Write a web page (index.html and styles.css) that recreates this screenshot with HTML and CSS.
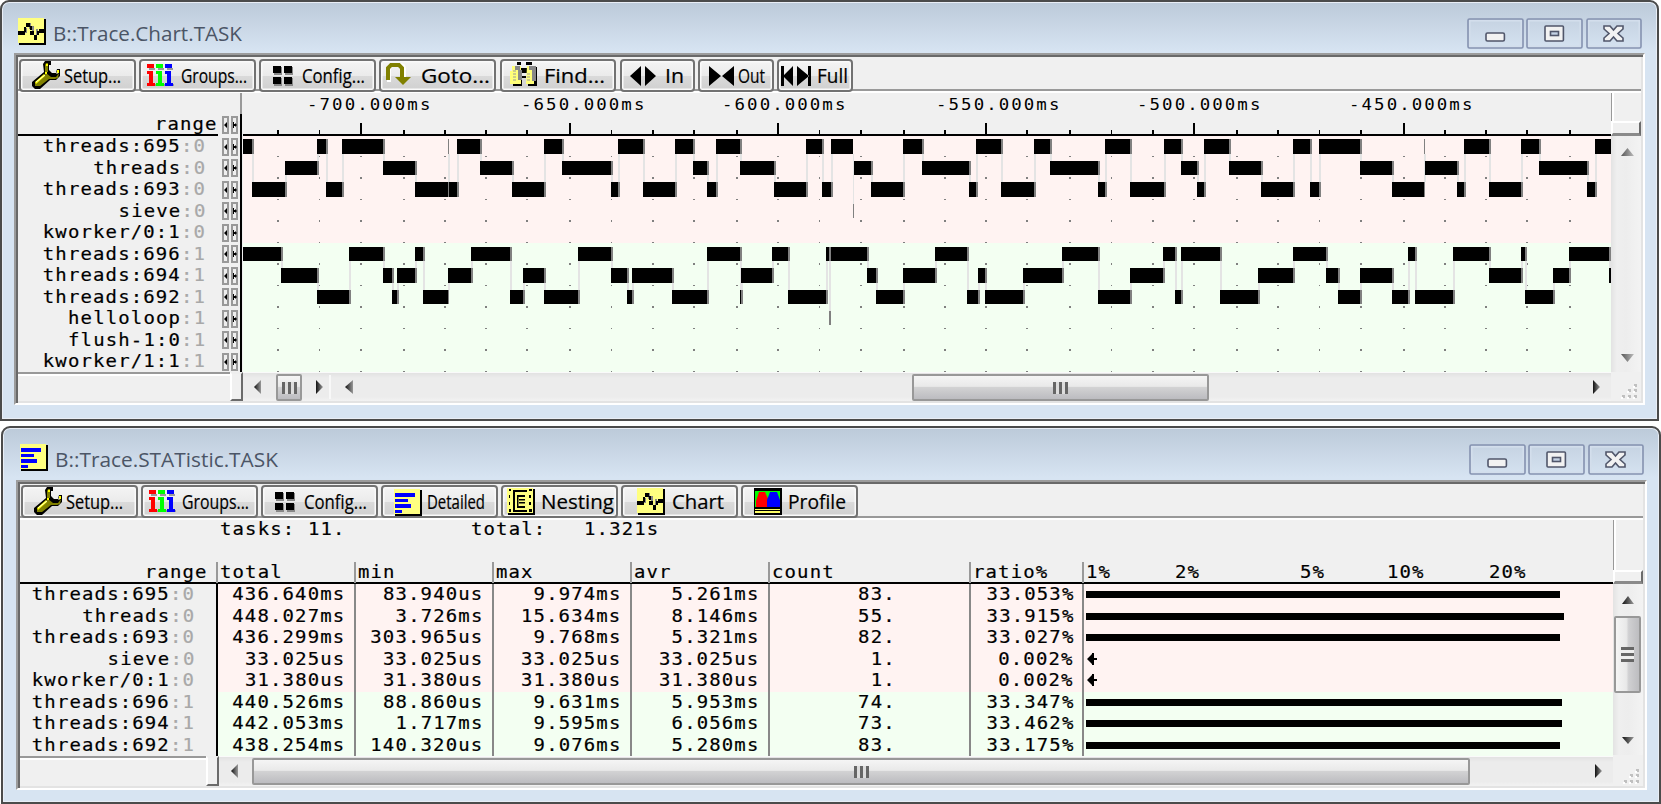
FILE: index.html
```html
<!DOCTYPE html>
<html lang="en">
<head>
<meta charset="utf-8">
<title>B::Trace</title>
<link rel="stylesheet" href="styles.css">
</head>
<body>
<svg width="0" height="0" class="defs">
  <defs>
    <symbol id="i-wrench" viewBox="0 0 29 28">
      <path d="M13 0h6v4h-2v5l3 3h4l1-4h3v7l-4 4h-6L8 28H3l-3-3v-4L12 11l-1-8z" fill="#000"/>
      <path d="M14 2h2v9h-3V4zM14 12l5 4h5l3-4-1 5-3 1h-6l-9 7H3v-3z" fill="#808000"/>
      <path d="M14 3h2v2h-2zM13 11h2v2h-2zM25 9h2v3h-2zM3 21l9-8 1 2-9 8z" fill="#ff0"/>
      <path d="M4 21l9-7M24 12h2" stroke="#ffc" stroke-width="1"/>
    </symbol>
    <symbol id="i-groups" viewBox="0 0 27 24">
      <path d="M2 4h6v2H2zM11 4h6v2h-6zM20 4h6v2h-6zM8 20h2v2H8zM17 20h2v2h-2zM25 20h2v2h-2z" fill="#999"/>
      <path d="M0 0h7v4H0zM0 7h6v12h2v3H0v-3h2v-9H0z" fill="#f00"/>
      <path d="M9 0h7v4H9zM9 7h6v12h2v3H9v-3h2v-9H9z" fill="#0f0"/>
      <path d="M18 0h7v4h-7zM18 7h6v12h2v3h-8v-3h2v-9h-2z" fill="#00f"/>
    </symbol>
    <symbol id="i-config" viewBox="0 0 20 20">
      <path d="M1 1h8v8H1zM12 1h8v8h-8zM1 12h8v8H1zM12 12h8v8h-8z" fill="#888"/>
      <path d="M0 0h8v7H0zM11 0h8v7h-8zM0 11h8v7H0zM11 11h8v7h-8z"/>
    </symbol>
    <symbol id="i-goto" viewBox="0 0 26 24">
      <path d="M2 18V5q0-4 4-4h7q4 0 4 4v11" fill="none" stroke="#fff" stroke-width="4" transform="translate(1 1)"/>
      <path d="M2 17V5l3-3h8l3 3v11" fill="none" stroke="#808000" stroke-width="4"/>
      <path d="M9 14h16l-8 8z" fill="#808000"/>
    </symbol>
    <symbol id="i-find" viewBox="0 0 27 24">
      <path d="M7 0h4v3H7zM16 0h6v3h-6zM10 6h7v5h-7zM9 17h3v7H3v-2h6zM12 14h4v2h-4zM23 5h4v19h-9v-2h5z"/>
      <path d="M2 4h9v18H0V9h2zM17 4h7v18h-8z" fill="#ffff78"/>
      <path d="M5 4h5v4H5zM8 8h4v10H8zM19 4h7v4h-7zM22 8h4v11h-4z" fill="#888"/>
      <path d="M3 9h3M3 12h3M3 15h3M3 18h3M17 12h3M17 15h3M17 18h3" stroke="#999"/>
    </symbol>
    <symbol id="i-in" viewBox="0 0 26 20"><path d="M0 10 11 0v20zM26 10 15 0v20z"/></symbol>
    <symbol id="i-out" viewBox="0 0 26 20"><path d="M12 10 0 0v20zM13 10 25 0v20z"/></symbol>
    <symbol id="i-full" viewBox="0 0 30 20"><path d="M0 0h3v20H0zM2 10 12 0v20zM27 0h3v20h-3zM28 10 16 0v20z"/></symbol>
    <symbol id="i-chart" viewBox="0 0 28 27">
      <path d="M1 1h27v26H1z"/><path d="M0 0h26v25H0z" fill="#ffff80"/>
      <path d="M11 5h2v6h-2zM7 10h2v5H7zM18 11h2v6h-2zM14 8h2v5h-2z" fill="#888"/>
      <path d="M0 13h7v4H0zM6 9h2v5H6zM8 5h4v4H8zM12 8h2v4h-2zM12 13h4v4h-4zM16 17h3v5h-3zM19 13h2v4h-2zM21 11h5v4h-5z"/>
    </symbol>
    <symbol id="i-stat" viewBox="0 0 28 27">
      <path d="M1 1h27v26H1z"/><path d="M0 0h26v25H0z" fill="#ffff80"/>
      <path d="M1 4h20v4H1zM1 10h13v3H1zM1 15h16v4H1zM1 21h7v3H1z" fill="#00f"/>
    </symbol>
    <symbol id="i-nest" viewBox="0 0 28 27">
      <path d="M1 1h27v26H1z"/><path d="M0 0h26v25H0z" fill="#ffff80"/>
      <path d="M6 2h14v2H6zM6 2h2v22H6zM6 22h14v2H6zM10 7h8v2h-8zM12 11h6v1.500h-6zM12 14h6v1.500h-6zM10 18h8v2h-8zM10 7h1.500v13H10zM2 1h2v2H2zM2 7h1v3H2zM2 14h1v3H2zM2 21h2v3H2zM22 1h3v2h-3zM22 7h2v3h-2zM22 14h2v3h-2zM22 21h3v3h-3z"/>
    </symbol>
    <symbol id="i-prof" viewBox="0 0 28 27">
      <path d="M0 0h28v27H0z"/><path d="M1 3h25v16H1z" fill="#0f0"/>
      <path d="M2 19v-6l3-9h6l4 9v6z" fill="#f00"/><path d="M13 19v-7l3-8h7l3 8v7z" fill="#00f"/>
      <path d="M1 21h25v1H1zM1 23h25v2H1z" fill="#ff6"/>
    </symbol>
    <symbol id="caps" viewBox="0 0 176 32">
      <g fill="none" stroke="#8592b0" stroke-width="1.6">
        <rect x="1" y="1" width="55" height="29" rx="1.5"/><rect x="60" y="1" width="55" height="29" rx="1.5"/><rect x="120" y="1" width="54" height="29" rx="1.5"/>
      </g>
      <g fill="none" stroke="#d3deec" stroke-width="1.6">
        <rect x="2.8" y="2.8" width="51.4" height="25.4"/><rect x="61.8" y="2.8" width="51.4" height="25.4"/><rect x="121.8" y="2.8" width="50.4" height="25.4"/>
      </g>
      <g stroke="#50566a" stroke-width="1.6" fill="#f2f2f2">
        <rect x="19" y="15" width="18.4" height="8" rx="1.5"/>
        <rect x="78" y="8" width="18.4" height="15" rx="1"/><rect x="83.5" y="13.5" width="8" height="4" fill="#c4d2e4"/>
        <path d="M137 8h6l3.500 4 3.500-4h6v3l-5 4.500 5 4.500v3h-6l-3.500-4-3.500 4h-6v-3l5-4.500-5-4.500z"/>
      </g>
    </symbol>
    <symbol id="grip" viewBox="0 0 18 18">
      <path d="M13 2h3v3h-3zM7 7h3v3H7zM13 7h3v3h-3zM1 13h3v3H1zM7 13h3v3H7zM13 13h3v3h-3z" fill="#c0c0c0"/>
      <path d="M12 4h2v2h-2zM6 9h2v2H6zM12 9h2v2h-2zM0 15h2v2H0zM6 15h2v2H6zM12 15h2v2h-2z" fill="#fff"/>
    </symbol>
    <linearGradient id="tri" x1="0" x2="1"><stop offset="0" stop-color="#111"/><stop offset="1" stop-color="#999"/></linearGradient>
    <linearGradient id="triv" x1="0" x2="1"><stop offset="0" stop-color="#555"/><stop offset="1" stop-color="#bbb"/></linearGradient>
  </defs>
</svg>

<section class="win win-chart">
  <header class="title">
    <svg class="ticon" width="28" height="27"><use href="#i-chart"/></svg>
    <svg class="tname" width="240" height="36"><text x="0" y="24" textLength="189" lengthAdjust="spacingAndGlyphs">B::Trace.Chart.TASK</text></svg>
    <svg class="caps" width="176" height="32"><use href="#caps"/></svg>
  </header>
  <div class="client">
    <nav class="toolbar">
      <svg class="tb" width="117" height="33"><use href="#i-wrench" x="13" y="2" width="29" height="28"/><text x="45" y="24" textLength="57" lengthAdjust="spacingAndGlyphs">Setup...</text></svg>
      <svg class="tb" width="117" height="33"><use href="#i-groups" x="8" y="5" width="27" height="24"/><text x="42" y="24" textLength="66" lengthAdjust="spacingAndGlyphs">Groups...</text></svg>
      <svg class="tb" width="117" height="33"><use href="#i-config" x="14" y="7" width="20" height="20"/><text x="43" y="24" textLength="63" lengthAdjust="spacingAndGlyphs">Config...</text></svg>
      <svg class="tb" width="117" height="33"><use href="#i-goto" x="7" y="4" width="26" height="24"/><text x="42" y="24" textLength="69" lengthAdjust="spacingAndGlyphs">Goto...</text></svg>
      <svg class="tb" width="116" height="33"><use href="#i-find" x="10" y="3" width="27" height="24"/><text x="44" y="24" textLength="61" lengthAdjust="spacingAndGlyphs">Find...</text></svg>
      <svg class="tb" width="75" height="33"><use href="#i-in" x="10" y="7" width="26" height="20"/><text x="45" y="24" textLength="19" lengthAdjust="spacingAndGlyphs">In</text></svg>
      <svg class="tb" width="76" height="33"><use href="#i-out" x="11" y="7" width="26" height="20"/><text x="40" y="24" textLength="27" lengthAdjust="spacingAndGlyphs">Out</text></svg>
      <svg class="tb" width="76" height="33"><use href="#i-full" x="4" y="7" width="30" height="20"/><text x="40" y="24" textLength="31" lengthAdjust="spacingAndGlyphs">Full</text></svg>
    </nav>
    <div class="body">
      <div class="names">
        <div class="nhead mono"><span>range</span></div>
        <div class="nrows mono" id="chart-names"></div>
        <svg class="spins" id="spins" width="18" height="280"></svg>
      </div>
      <svg id="chart" width="1368" height="279"></svg>
      <div class="vscroll">
        <div class="vtop"></div><div class="split-v"></div>
        <svg class="vbar" width="30" height="236"><path d="M10 20 16.500 12 23 20z" fill="url(#triv)"/><path d="M10 218h13l-6.500 8z" fill="url(#triv)"/></svg>
      </div>
    </div>
    <div class="bottom">
      <div class="under"></div><div class="split-h"></div>
      <div class="hscroll">
        <svg width="33" height="29"><path d="M11 14 18 7v14z" fill="url(#tri)"/></svg>
        <div class="thumb small"><i></i></div>
        <svg width="610" height="29"><path d="M14 7v14l7-7z" fill="url(#tri)"/><path d="M28 2v24" stroke="#f8f8f8" stroke-width="2"/><path d="M43 14l8-7v14z" fill="url(#tri)"/></svg>
        <div class="thumb main"><i></i></div>
        <div class="track"></div>
        <svg width="26" height="29"><path d="M8 7v14l7-7z" fill="url(#tri)"/></svg>
      </div>
      <svg class="grip" width="18" height="18"><use href="#grip"/></svg>
    </div>
  </div>
</section>

<section class="win win-stat">
  <header class="title">
    <svg class="ticon" width="28" height="27"><use href="#i-stat"/></svg>
    <svg class="tname" width="240" height="36"><text x="0" y="24" textLength="223" lengthAdjust="spacingAndGlyphs">B::Trace.STATistic.TASK</text></svg>
    <svg class="caps" width="176" height="32"><use href="#caps"/></svg>
  </header>
  <div class="client">
    <nav class="toolbar">
      <svg class="tb" width="117" height="33"><use href="#i-wrench" x="13" y="2" width="29" height="28"/><text x="45" y="24" textLength="57" lengthAdjust="spacingAndGlyphs">Setup...</text></svg>
      <svg class="tb" width="117" height="33"><use href="#i-groups" x="8" y="5" width="27" height="24"/><text x="41" y="24" textLength="67" lengthAdjust="spacingAndGlyphs">Groups...</text></svg>
      <svg class="tb" width="117" height="33"><use href="#i-config" x="14" y="7" width="20" height="20"/><text x="43" y="24" textLength="63" lengthAdjust="spacingAndGlyphs">Config...</text></svg>
      <svg class="tb" width="117" height="33"><use href="#i-stat" x="13" y="4" width="28" height="27"/><text x="46" y="24" textLength="58" lengthAdjust="spacingAndGlyphs">Detailed</text></svg>
      <svg class="tb" width="117" height="33"><use href="#i-nest" x="6" y="3" width="28" height="27"/><text x="40" y="24" textLength="73" lengthAdjust="spacingAndGlyphs">Nesting</text></svg>
      <svg class="tb" width="117" height="33"><use href="#i-chart" x="16" y="3" width="28" height="27"/><text x="51" y="24" textLength="52" lengthAdjust="spacingAndGlyphs">Chart</text></svg>
      <svg class="tb" width="117" height="33"><use href="#i-prof" x="13" y="3" width="28" height="27"/><text x="47" y="24" textLength="58" lengthAdjust="spacingAndGlyphs">Profile</text></svg>
    </nav>
    <div class="body">
      <div class="stats">
        <div class="summary mono"><span>tasks: 11.</span><span class="tot">total:&nbsp;&nbsp; 1.321s</span></div>
        <div class="srow shead mono" id="stat-head"></div>
        <div id="stat-rows" class="mono"></div>
      </div>
      <div class="vscroll">
        <div class="vtop"></div><div class="split-v"></div>
        <div class="vbar">
          <svg width="30" height="33"><path d="M9 20 15 12 21 20z" fill="url(#tri)"/></svg>
          <div class="vthumb"><i></i></div>
          <svg width="30" height="62"><path d="M9 44h12l-6 7z" fill="url(#tri)"/></svg>
        </div>
      </div>
    </div>
    <div class="bottom">
      <div class="under"></div><div class="split-h"></div>
      <div class="hscroll">
        <svg width="33" height="29"><path d="M12 14 19 7v14z" fill="url(#tri)"/></svg>
        <div class="thumb main"><i></i></div>
        <div class="track"></div>
        <svg width="26" height="29"><path d="M8 7v14l7-7z" fill="url(#tri)"/></svg>
      </div>
      <svg class="grip" width="18" height="18"><use href="#grip"/></svg>
    </div>
  </div>
</section>
<script src="trace.js"></script>
</body>
</html>
```
FILE: styles.css
```css
* { box-sizing: border-box; }
body { margin: 0; width: 1661px; height: 804px; background: #fff; overflow: hidden; font-family: "Open Sans", "Noto Sans", sans-serif; }
svg { display: block; flex: none; }
.defs { position: absolute; }
.win { border: 2px solid #4b4b4b; border-radius: 9px 9px 0 0; background: linear-gradient(#bccad9, #d7e4f2 50px); box-shadow: inset 0 0 0 1px #e9eef6; }
.win-chart { width: 1659px; height: 421px; padding: 0 12px; }
.win-stat { width: 1660px; height: 378px; margin: 5px 0 0 1px; padding: 0 12px 0 13px; }
.title { height: 51px; display: flex; }
.win-stat .title { height: 52px; }
.ticon { margin: 16px 0 0 4px; }
.tname { margin: 15px 0 0 7px; font-size: 20.5px; fill: #4b5566; }
.caps { margin: 16px 2px 0 auto; }
.client { width: 1631px; border: 2px solid; border-color: #9c9c9c #fff #fff #9c9c9c; background: #f0f0f0; box-shadow: inset 2px 2px #696969, inset -2px -2px #e3e3e3; padding: 2px; }
.win-chart .client { height: 352px; }
.win-stat .client { height: 310px; }
.toolbar { display: flex; gap: 3px; height: 36px; padding: 2px 0 0 1px; background: linear-gradient(#999, #999) 0 32px / 100% 2px no-repeat, linear-gradient(#fff, #fff) 0 34px / 100% 2px no-repeat; }
.win-stat .toolbar { padding-top: 1px; }
.tb { border: 2px solid #727272; border-radius: 4px; background: linear-gradient(#f4f4f4, #ebebeb 50%, #dadada 51%, #d0d0d0); box-shadow: inset 0 0 0 1.5px #fafafa; font-size: 20px; overflow: visible; }
.tb > * { transform: translate(-2px, -2px); }
.tb text { stroke: #000; stroke-width: .2px; }
.win-chart .tb:nth-child(5), .win-chart .tb:nth-child(6) { margin-left: 1px; }
.body { display: flex; background: #f0f0f0; }
.mono { font: 18px/21px "DejaVu Sans Mono", monospace; letter-spacing: 1.09px; color: #000; white-space: pre; }
.mono span { display: inline-block; transform: translateY(-1px) scaleX(1.053); transform-origin: 100% 50%; -webkit-text-stroke: .2px; }
.mono b { font-weight: 400; color: #a8a8a8; }
.names { position: relative; width: 225px; height: 279px; border-right: 1px solid #f0f0f0; background: linear-gradient(#999, #999) 222px 0 / 2px 21px no-repeat, linear-gradient(#000, #000) 222px 21px / 2px 260px no-repeat; }
.nhead { height: 43px; width: 200px; padding-top: 21px; border-bottom: 2px solid #000; text-align: right; }
.nrows { width: 188px; text-align: right; }
.nrows div { height: 21.5px; }
.nrows div span { margin-top: -2px; }
.spins { position: absolute; left: 203px; top: 22px; }
#chart { font: 16.5px "DejaVu Sans Mono", monospace; letter-spacing: 1.97px; }
.vscroll { width: 30px; display: flex; flex-direction: column; }
.vtop { height: 28px; border-left: 1px solid #999; box-shadow: inset 2px 0 #fff; }
.win-stat .vtop { height: 50px; }
.split-v { height: 15px; border: 2px solid; border-color: #fff #6b6b6b #8a8a8a #fff; border-width: 2px 2px 3px 2px; background: #f0f0f0; }
.win-stat .split-v { height: 14px; }
.vbar { background: linear-gradient(90deg, #e3e3e3, #efefef 20%, #ededed 50%, #f3f3f3); }
.vthumb { width: 27px; height: 77px; margin-left: 1px; margin-top: -1px; border: 2px solid #989898; border-radius: 2px; background: linear-gradient(90deg, #f5f5f5, #e9e9e9 45%, #d0d0d2 55%, #bdbdc0); display: flex; align-items: center; justify-content: center; }
.vthumb i { width: 13px; height: 15px; background: repeating-linear-gradient(#666 0 3px, #eee 3px 6px); }
.bottom { display: flex; position: relative; }
.win-chart .bottom { height: 29px; }
.win-stat .bottom { height: 30px; }
.under { width: 212px; border-top: 2px solid #999; box-shadow: inset 0 2px #fff; }
.win-stat .under { width: 186px; }
.split-h { width: 13px; border: 2px solid; border-color: #eee #6b6b6b #6b6b6b #fff; background: #f0f0f0; }
.hscroll { display: flex; width: 1368px; border-top: 1px solid #fafafa; background: linear-gradient(#e2e2e2, #ececec 5px, #ececec 85%, #f2f2f2); }
.win-stat .hscroll { width: 1394px; }
.thumb { height: 27px; margin-top: 1px; border: 2px solid #989898; border-radius: 2px; background: linear-gradient(#f5f5f5, #e9e9e9 45%, #d2d2d3 50%, #bcbcc0); display: flex; align-items: center; justify-content: center; }
.thumb i { width: 15px; height: 12px; background: repeating-linear-gradient(90deg, #666 0 3px, #ddd 3px 6px); }
.small { width: 26px; }
.win-chart .main { width: 297px; }
.win-stat .main { width: 1218px; }
.track { flex: 1; }
.grip { position: absolute; right: 2px; bottom: 1px; }
.stats { width: 1593px; }
.summary { height: 42px; padding-left: 200px; display: flex; }
.summary span, .shead span { transform-origin: 0 50%; margin-top: -1px; }
.summary span:first-child { width: 251px; transform-origin: 0 50%; }
.srow { display: grid; grid-template-columns: 196px 138px 138px 138px 138px 201px 113px 531px; height: 21.5px; }
.srow > div { text-align: right; padding-right: 9px; border-left: 2px solid #888; height: 100%; overflow: visible; }
#stat-rows span { margin-top: -2px; }
.srow > div:first-child { border: 0; padding-right: 21px; }
.srow > div:nth-child(2) { border-color: #000; }
.srow > div:nth-child(6) { padding-right: 73px; }
.srow > div:nth-child(7) { padding-right: 8px; }
.shead { height: 22px; border-bottom: 2px solid #000; }
.shead > div { text-align: left; padding: 0 0 0 2px; }
.shead > div:nth-child(n+2) { border-color: #999; }
.shead > div:nth-child(n+6) { padding-right: 0; }
.shead > div:first-child { text-align: right; padding-right: 8px; }
.shead > div:first-child span { transform-origin: 100% 50%; }
.shead > div:last-child { display: flex; }
.shead .tick { width: 0; }
.row0 > div:not(:first-child) { background: #fff3f2; }
.row1 > div:not(:first-child) { background: #f3fff2; }
.srow .bar { height: 7px; margin: 7px 0 0 2px; background: #000; }
.srow .arrow { margin: 3px 0 0 2px; }
```
FILE: trace.js
```js
const tasks = [["threads:695", 0], ["threads", 0], ["threads:693", 0], ["sieve", 0], ["kworker/0:1", 0],
  ["threads:696", 1], ["threads:694", 1], ["threads:692", 1], ["helloloop", 1], ["flush-1:0", 1], ["kworker/1:1", 1]];
const label = ([n, c]) => `<span>${n}<b>:${c}</b></span>`;
document.getElementById("chart-names").innerHTML = tasks.map(t => `<div>${label(t)}</div>`).join("");

// step buttons beside every range name
let spins = "";
for (let i = 0; i < 12; i++) {
  const y = Math.round(i * 21.5) + 1;
  for (const x of [2, 11])
    spins += `<rect x="${x}" y="${y + 1}" width="5" height="16" fill="#eee" stroke="#999" stroke-width="2"/>`;
  spins += `<path d="M3 ${y + 9}l3-3v6zM12 ${y + 6}h1v2h1v-1l2 2-2 2v-1h-1v2h-1z"/>`;
}
document.getElementById("spins").innerHTML = spins;

// each run: row, start, end (chart pixels, shifted by the names column)
const core0 = [[0,243,252],[2,252,285],[1,285,317],[0,317,326],[2,326,342],[0,342,383],[1,383,415],[2,415,448],[0,448,448],[2,449,457],[0,457,480],[1,480,512],[2,512,544],[0,544,562],[1,562,611],[2,611,618],[0,618,643],[2,643,675],[0,675,693],[1,693,707],[2,707,716],[0,716,740],[1,740,774],[2,774,806],[0,806,822],[2,822,831],[0,831,853],[3,853,853],[1,854,871],[2,871,903],[0,903,922],[1,922,969],[2,969,976],[0,976,1001],[2,1001,1034],[0,1034,1050],[1,1050,1098],[2,1098,1105],[0,1105,1130],[2,1130,1164],[0,1164,1181],[1,1181,1197],[2,1197,1204],[0,1204,1229],[1,1229,1261],[2,1261,1293],[0,1293,1310],[2,1310,1319],[0,1319,1360],[1,1360,1392],[2,1392,1424],[0,1424,1424],[1,1425,1457],[2,1457,1464],[0,1464,1489],[2,1489,1521],[0,1521,1539],[1,1539,1587],[2,1587,1595],[0,1595,1615]];
const core1 = [[5,243,281],[6,281,317],[7,317,349],[5,349,383],[6,383,392],[7,392,397],[6,397,415],[5,415,423],[7,423,448],[6,448,471],[5,471,510],[7,510,523],[6,523,544],[7,544,578],[5,578,611],[6,611,627],[7,627,632],[6,632,672],[7,672,707],[5,707,740],[7,740,741],[6,741,772],[5,772,788],[7,788,826],[5,826,829],[8,829,829],[5,831,867],[6,867,876],[7,876,903],[6,903,935],[5,935,967],[7,967,978],[6,978,985],[7,985,1023],[6,1023,1062],[5,1062,1098],[7,1098,1130],[6,1130,1163],[5,1163,1175],[7,1175,1181],[5,1181,1220],[7,1220,1258],[6,1258,1293],[5,1293,1326],[6,1326,1338],[7,1338,1360],[6,1360,1392],[7,1392,1408],[5,1408,1415],[7,1415,1453],[5,1453,1489],[6,1489,1521],[5,1521,1525],[7,1525,1553],[6,1553,1569],[5,1569,1609],[6,1609,1615]];
const ticks = [277,319,360,403,444,485,526,569,611,652,693,736,777,819,860,903,944,985,1026,1069,1111,1152,1193,1236,1277,1319,1360,1403,1444,1485,1526,1569];
const narrow = new Set([319, 611, 819, 1111, 1319]);
const majors = new Set([2, 7, 12, 17, 22, 27]);
const X0 = 243, Y0 = 43;
const top0 = [3, 25, 46, 68, 89, 111, 132, 154, 175];
const tall = [15, 14, 15, 14, 15, 14, 15, 14, 14];
const rect = (x, y, w, h, f) => `<rect x="${x}" y="${y}" width="${w}" height="${h}" fill="${f}"/>`;
let g = rect(0, Y0, 1368, 107, "#fff3f2") + rect(0, Y0 + 107, 1368, 129, "#f3fff2") + rect(0, 41, 1368, 2, "#000");
ticks.forEach((t, i) => {
  const w = narrow.has(t) ? 1 : 2, major = majors.has(i);
  g += rect(t - X0, major ? 30 : 37, w, major ? 12 : 5, "#000");
  for (let r = 1; r <= 11; r++)
    g += rect(t - X0, Y0 + Math.round(r * 21.5 - 1.6), w, r % 2 ? 1 : 2, "#808080");
});
for (const runs of [core0, core1]) {
  runs.forEach(([r, , e], i) => {
    const n = runs[i + 1];
    if (!n) return;
    const a = Math.min(r, n[0]), b = Math.max(r, n[0]);
    const y = Y0 + top0[a] + tall[a];
    const w = n[0] === 3 || r === 3 ? 1 : 2;
    g += rect(e - X0, y, w, Y0 + top0[b] - y, "#e4e4e4");
  });
  runs.forEach(([r, s, e]) => {
    g += rect(s - X0, Y0 + top0[r], e - s, tall[r], "#000");
  });
  runs.forEach(([r, , e]) => {
    g += rect(e - X0, Y0 + top0[r], r === 3 || e === 448 || e === 1424 ? 1 : e === 853 ? 0 : 2, tall[r], "#808080");
  });
}
[[308, 700], [522, 650], [723, 600], [937, 550], [1138, 500], [1350, 450]].forEach(([x, v]) => {
  g += `<text transform="translate(${x - X0 - 1} 17) scale(1.055 1)">-${v}.000ms</text>`;
});
const chart = document.getElementById("chart");
chart.setAttribute("shape-rendering", "crispEdges");
chart.innerHTML = g;

const rows = [
  ["436.640ms", "83.940us", "9.974ms", "5.261ms", "83.", "33.053%", 474],
  ["448.027ms", "3.726ms", "15.634ms", "8.146ms", "55.", "33.915%", 478],
  ["436.299ms", "303.965us", "9.768ms", "5.321ms", "82.", "33.027%", 474],
  ["33.025us", "33.025us", "33.025us", "33.025us", "1.", "0.002%", 0],
  ["31.380us", "31.380us", "31.380us", "31.380us", "1.", "0.002%", 0],
  ["440.526ms", "88.860us", "9.631ms", "5.953ms", "74.", "33.347%", 476],
  ["442.053ms", "1.717ms", "9.595ms", "6.056ms", "73.", "33.462%", 476],
  ["438.254ms", "140.320us", "9.076ms", "5.280ms", "83.", "33.175%", 474]];
const arrow = `<svg class="arrow" width="12" height="14"><path d="M1 7l5-5v-1h2v5h3v2H8v5H6v-1z"/></svg>`;
document.getElementById("stat-rows").innerHTML = rows.map((r, i) => {
  const cells = r.slice(0, 6).map(v => `<div><span>${v}</span></div>`).join("");
  const bar = r[6] ? `<div class="bar" style="width:${r[6]}px"></div>` : arrow;
  return `<div class="srow row${tasks[i][1]}"><div>${label(tasks[i])}</div>${cells}<div>${bar}</div></div>`;
}).join("");
const scale = [["1%", 0], ["2%", 89], ["5%", 125], ["10%", 87], ["20%", 102]];
document.getElementById("stat-head").innerHTML =
  ["range", "total", "min", "max", "avr", "count", "ratio%"].map(t => `<div><span>${t}</span></div>`).join("") +
  `<div>${scale.map(([t, gap]) => `<div class="tick" style="margin-left:${gap}px"><span>${t}</span></div>`).join("")}</div>`;
```
